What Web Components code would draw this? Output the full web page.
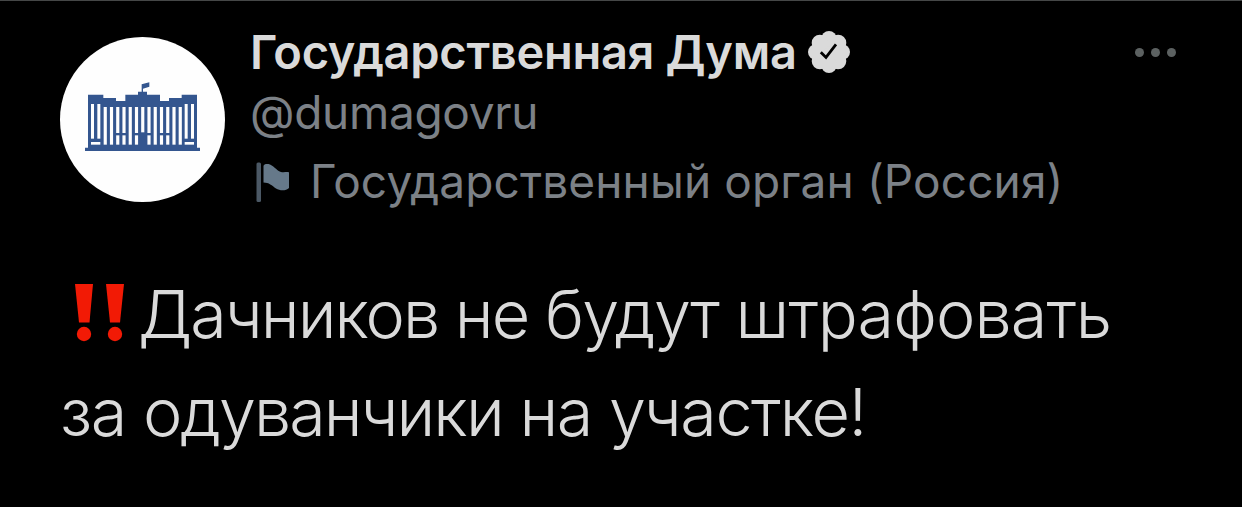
<!DOCTYPE html>
<html lang="ru">
<head>
<meta charset="utf-8">
<title>Государственная Дума</title>
<style>
  html, body { margin: 0; background: #000; }
  body { font-family: Inter, "Liberation Sans", sans-serif; }
  .tight { letter-spacing: -2px; }
  .snug { letter-spacing: -1.5px; }
  .loose { letter-spacing: -.9px; }
</style>
</head>
<body>
<tweet-card>
  <duma-avatar slot="avatar"></duma-avatar>
  <tweet-author slot="author">
    <span slot="name">Государственная Дума</span>
    <span slot="handle">@dumagovru</span>
    <span slot="label">Государственный орган (Россия)</span>
  </tweet-author>
  <more-button slot="menu"></more-button>
  <tweet-text slot="text">
    <span slot="first"><span class="tight">Дачников не </span><span class="snug">будут </span><span class="loose">штрафовать</span></span>
    <span slot="second"><span class="snug">за </span><span class="tight">одуванчики </span><span class="snug">на участке!</span></span>
  </tweet-text>
</tweet-card>

<script>
class ShadowElement extends HTMLElement {
  constructor() {
    super();
    const tmpl = document.createElement('template');
    tmpl.innerHTML = this.constructor.markup;
    this.attachShadow({ mode: 'open' }).append(tmpl.content.cloneNode(true));
  }
}

class TweetCard extends ShadowElement {
  static markup = /*html*/`
    <style>
      :host { display: block; box-sizing: border-box; height: 507px; padding: 21px 66px 0 60px; border-top: 1px solid #454747; background: #000; overflow: hidden; }
      header { display: flex; align-items: flex-start; height: 243px; }
      .avatar { padding-top: 15px; margin-right: 25px; }
      .author { flex: 1; }
    </style>
    <header>
      <div class="avatar"><slot name="avatar"></slot></div>
      <div class="author"><slot name="author"></slot></div>
      <slot name="menu"></slot>
    </header>
    <slot name="text"></slot>
  `;
}

class DumaAvatar extends ShadowElement {
  static markup = /*html*/`
    <style>
      :host { display: block; width: 165px; height: 165px; border-radius: 50%; background: #fefefe; overflow: hidden; }
      svg { display: block; }
    </style>
    <svg width="165" height="165" viewBox="-60 -114 495 495" fill="#34568f">
      <!-- flag and roof line -->
      <path d="M185 50V28L208 22V35L189 41V50H201V59H240V78H267V69H305V59H351V218H360V228H15V218H24V59H70V69H108V78H136V59H174V50Z"/>
      <g id="windows" fill="#fefefe"></g>
    </svg>
  `;
  connectedCallback() {
    const rects = [];
    // side wings
    for (const x of [33, 52, 314, 333]) rects.push([x, 87, 9, 104]);
    rects.push([33, 201, 28, 8], [314, 201, 28, 8]);
    // tall windows, some of them split by a balcony
    for (let i = 0; i < 13; i++) {
      const x = 71 + i * 18.75;
      if ([2, 3, 5, 7, 9, 10].includes(i)) rects.push([x, 96, 9.5, 78], [x, 181, 9.5, 28]);
      else if (i === 6) rects.push([x, 96, 9.5, 76]);
      else rects.push([x, 96, 9.5, 113]);
    }
    this.shadowRoot.getElementById('windows').innerHTML = rects
      .map(([x, y, w, h]) => `<rect x="${x}" y="${y}" width="${w}" height="${h}"/>`).join('');
  }
}

class TweetAuthor extends ShadowElement {
  static markup = /*html*/`
    <style>
      :host { display: block; white-space: nowrap; color: #7c8187; font-size: 46px; line-height: 60px; }
      .row { display: flex; height: 60px; }
      .name { color: #dadada; font-size: 47px; font-weight: 600; letter-spacing: -.3px; }
      .handle { letter-spacing: -.3px; }
      .label { margin-top: 9px; letter-spacing: .13px; }
      .badge { margin: 9px 0 0 11px; }
      .flag { margin: 10px 19px 0 5px; }
    </style>
    <div class="row">
      <span class="name"><slot name="name"></slot></span>
      <svg class="badge" width="42" height="42" viewBox="0 0 42 42" fill="#dadada">
        <circle cx="21" cy="21" r="15"/>
        <circle cx="21" cy="7.8" r="7.8"/><circle cx="30.1" cy="11.9" r="8.2"/>
        <circle cx="34.2" cy="21" r="7.8"/><circle cx="30.1" cy="30.1" r="8.2"/>
        <circle cx="21" cy="34.2" r="7.8"/><circle cx="11.9" cy="30.1" r="8.2"/>
        <circle cx="7.8" cy="21" r="7.8"/><circle cx="11.9" cy="11.9" r="8.2"/>
        <path d="M12.8 21.2L18 26.4L28 13.4" fill="none" stroke="#000" stroke-width="2.8"/>
      </svg>
    </div>
    <div class="row handle"><slot name="handle"></slot></div>
    <div class="row label">
      <svg class="flag" width="36" height="42" viewBox="0 0 36 42">
        <rect x="1.5" y="1.5" width="4.5" height="39.5" rx="1.5" fill="#4b5865"/>
        <path d="M8.5 5C9 3 12 2.500 15 3.500C20 5.500 22 10.500 27 11.200C30 11.500 33 10.500 34 11.500V27C31 30 25 30 21 27.500C17 24.500 14 21.500 8.500 21.500Z" fill="#66798a"/>
      </svg>
      <span class="org"><slot name="label"></slot></span>
    </div>
  `;
}

class MoreButton extends ShadowElement {
  static markup = /*html*/`
    <style>
      :host { display: flex; gap: 7px; padding-top: 25.5px; }
      i { width: 9px; height: 9px; border-radius: 50%; background: #5c6161; }
    </style>
    <i></i><i></i><i></i>
  `;
}

class TweetText extends ShadowElement {
  static markup = /*html*/`
    <style>
      :host { display: block; color: #dadada; font-size: 66.5px; font-weight: 325; line-height: 98px; white-space: nowrap; }
      .line { display: flex; height: 98px; }
      svg { flex: none; margin: 18px 0 0 14px; }
    </style>
    <div class="line">
      <!-- double exclamation mark -->
      <svg width="64" height="60" viewBox="0 0 64 60" fill="#f21a05">
        <path d="M1 1H19L15.500 39.500H5Z"/><circle cx="10" cy="51" r="7.200"/>
        <path d="M32 1H50L46 39.500H36Z"/><circle cx="41" cy="51" r="7.200"/>
      </svg>
      <span class="first"><slot name="first"></slot></span>
    </div>
    <div class="line"><span class="second"><slot name="second"></slot></span></div>
  `;
}

customElements.define('tweet-card', TweetCard);
customElements.define('duma-avatar', DumaAvatar);
customElements.define('tweet-author', TweetAuthor);
customElements.define('more-button', MoreButton);
customElements.define('tweet-text', TweetText);
</script>
</body>
</html>
